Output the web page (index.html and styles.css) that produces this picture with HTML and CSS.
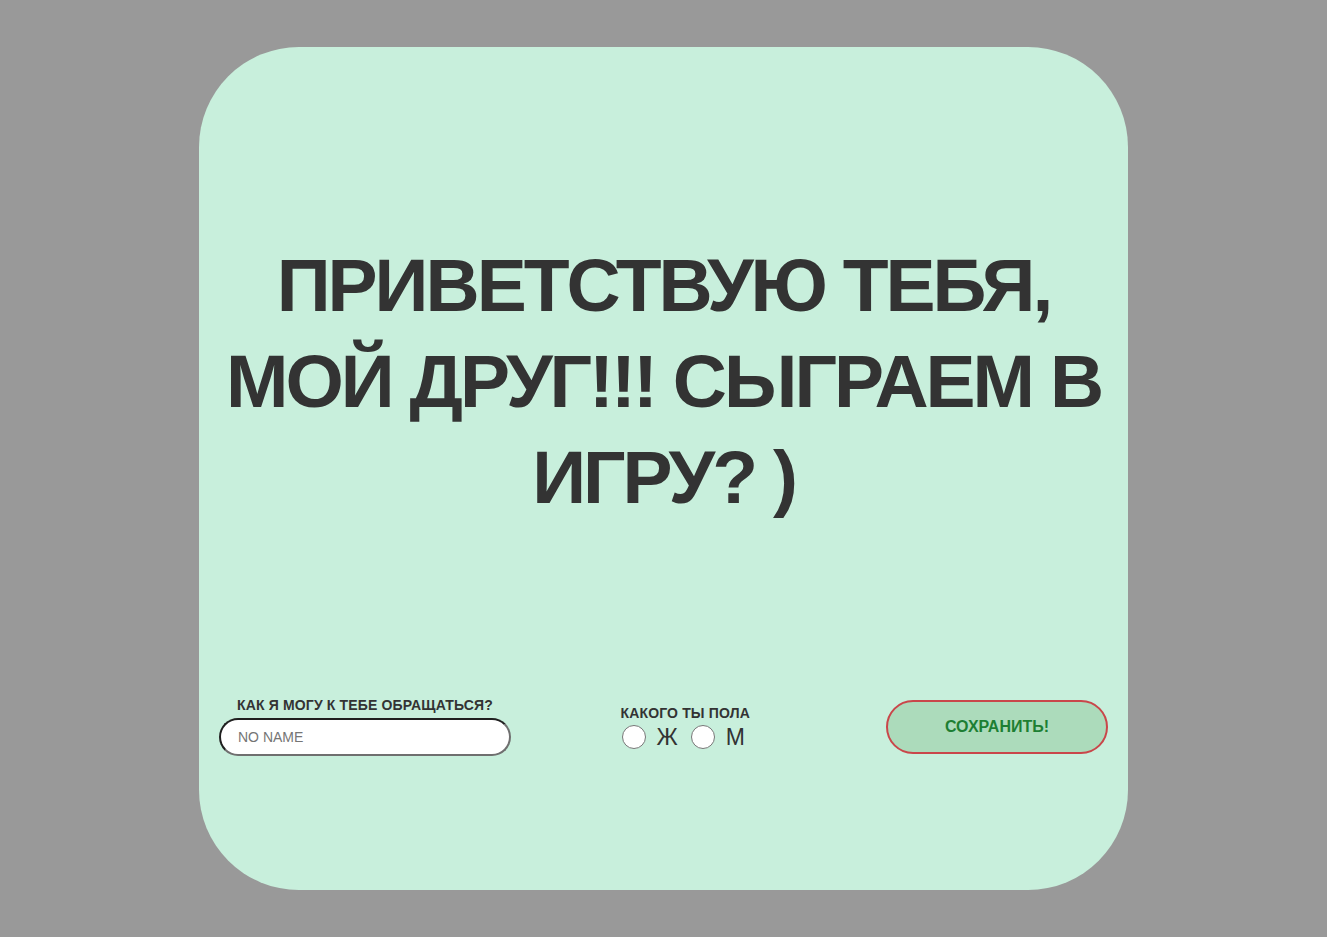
FILE: index.html
```html
<!DOCTYPE html>
<html lang="ru">
<head>
<meta charset="utf-8">
<title>Игра</title>
<link rel="stylesheet" href="styles.css">
</head>
<body>
<main class="card">
  <h1 class="title">ПРИВЕТСТВУЮ ТЕБЯ, МОЙ ДРУГ!!! СЫГРАЕМ В ИГРУ? )</h1>
  <form class="form">
    <div class="field">
      <label class="label" for="name">КАК Я МОГУ К ТЕБЕ ОБРАЩАТЬСЯ?</label>
      <input class="input" id="name" type="text" placeholder="NO NAME">
    </div>
    <div class="gender">
      <span class="label">КАКОГО ТЫ ПОЛА</span>
      <div class="options">
        <label class="opt"><input class="radio" type="radio" name="g"><span>Ж</span></label>
        <label class="opt"><input class="radio" type="radio" name="g"><span>М</span></label>
      </div>
    </div>
    <button class="btn" type="button">СОХРАНИТЬ!</button>
  </form>
</main>
</body>
</html>
```

FILE: styles.css
```css
* { box-sizing: border-box; }
html, body { margin: 0; }
body {
  background: #999999;
  font-family: "Liberation Sans", Arial, sans-serif;
  color: #333333;
  padding-top: 47px;
  height: 937px;
  overflow: hidden;
}
.card {
  width: 929px;
  height: 843px;
  margin: 0 auto;
  background: #c8efdc;
  border-radius: 100px;
  padding: 190px 20px 0;
  display: flex;
  flex-direction: column;
}
.title {
  margin: 0;
  padding: 0 6px;
  font-size: 75px;
  letter-spacing: -3px;
  line-height: 96px;
  font-weight: bold;
  text-align: center;
  color: #333333;
}
.form {
  margin-top: 172px;
  height: 60px;
  display: flex;
  align-items: center;
  justify-content: space-between;
}
.field {
  display: flex;
  flex-direction: column;
  align-items: center;
  gap: 5px;
  width: 292px;
}
.label {
  font-size: 14px;
  letter-spacing: 0.15px;
  line-height: 15px;
  font-weight: bold;
  color: #333333;
}
.input {
  width: 292px;
  height: 38px;
  border-radius: 19px;
  border: 2px solid;
  border-color: #1f1f1f #6f6f6f #6f6f6f #1f1f1f;
  background: #ffffff;
  padding: 0 17px;
  font-family: "Liberation Sans", Arial, sans-serif;
  font-size: 14px;
  outline: none;
}
.input::placeholder { color: #757575; }
.gender {
  width: 156px;
  display: flex;
  flex-direction: column;
  align-items: flex-start;
  gap: 4px;
}
.options {
  display: flex;
  align-items: center;
  gap: 12px;
}
.opt {
  display: flex;
  align-items: center;
  gap: 11px;
  font-size: 23px;
  line-height: 24px;
  color: #333333;
}
.radio {
  appearance: none;
  -webkit-appearance: none;
  margin: 0 0 0 1px;
  width: 24px;
  height: 24px;
  border-radius: 50%;
  border: 1px solid #767676;
  background: #ffffff;
}
.btn {
  width: 222px;
  height: 54px;
  border-radius: 27px;
  border: 2px solid #c9464a;
  background: #acdbbb;
  color: #1d7f33;
  font-family: "Liberation Sans", Arial, sans-serif;
  font-size: 16px;
  font-weight: bold;
  padding: 0;
}
```
